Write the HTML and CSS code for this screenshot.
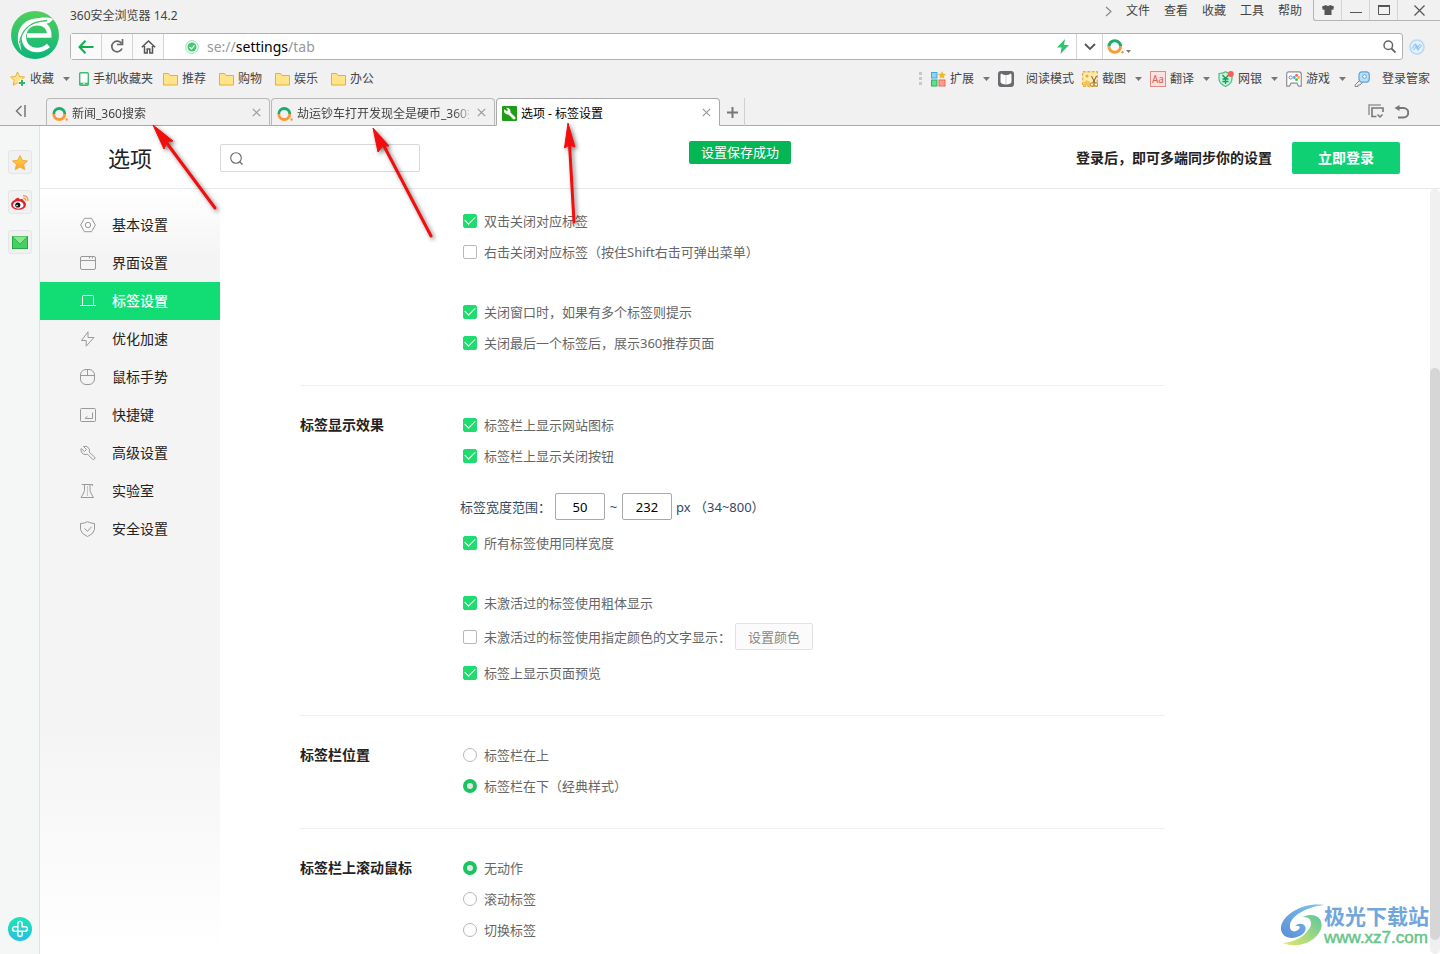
FILE: index.html
```html
<!DOCTYPE html>
<html lang="zh-CN">
<head>
<meta charset="utf-8">
<title>选项 - 标签设置</title>
<link rel="stylesheet" href="styles.css">
</head>
<body>
<svg class="defs" aria-hidden="true">
  <defs>
    <linearGradient id="logo-green" x1="0" y1="0" x2="0" y2="1"><stop offset="0" stop-color="#52cf5c"/><stop offset="1" stop-color="#0cb57c"/></linearGradient>
    <linearGradient id="gold" x1="0" y1="0" x2="0" y2="1"><stop offset="0" stop-color="#ffd83c"/><stop offset="1" stop-color="#ffa52c"/></linearGradient>
    <linearGradient id="aqua" x1="0" y1="0" x2="0" y2="1"><stop offset="0" stop-color="#1be6b4"/><stop offset="1" stop-color="#26bfe4"/></linearGradient>
    <linearGradient id="swirl-blue" x1="0" y1="1" x2="1" y2="0"><stop offset="0" stop-color="#5b8ed6"/><stop offset="1" stop-color="#7cc8ee"/></linearGradient>
    <linearGradient id="swirl-green" x1="0" y1="1" x2="1" y2="0"><stop offset="0" stop-color="#e3e96a"/><stop offset="1" stop-color="#5cc69c"/></linearGradient>
    <symbol id="folder" viewBox="0 0 15 14"><path d="M.5 1.500h5l1.500 2h7.500v9.500h-14z" fill="#ffe48c" stroke="#e6b12e"/></symbol>
    <symbol id="caret" viewBox="0 0 7 4"><path d="M0 0h7L3.500 4z" fill="#777"/></symbol>
    <symbol id="ring" viewBox="0 0 16 16"><path d="M1.800 8a5.500 5.500 0 0 1 11 0" fill="none" stroke="#1bae6b" stroke-width="2.800"/><path d="M1.800 8a5.500 5.500 0 0 0 11 0" fill="none" stroke="#f99a36" stroke-width="2.800"/><circle cx="14.600" cy="13.500" r="1.200" fill="#f99a36"/></symbol>
    <symbol id="close" viewBox="0 0 9 9"><path d="M.8.8l7.400 7.400M8.200.8L.8 8.200" stroke="#999" stroke-width="1.200"/></symbol>
  </defs>
</svg>

<header class="chrome">
  <div class="top">
    <svg class="logo" viewBox="0 0 48 48" role="img" aria-label="360"><circle cx="24" cy="24" r="24" fill="url(#logo-green)"/><path d="M10.500 40C2.500 26 8 9.500 24 7.500c7-1 12-2 18 .2-1.500 3.300-5 5.300-10 5.300C20 13 11 19 9.500 29c-.5 4 0 7 1 11z" fill="#fff"/><path d="M16 24.500h22.200C38.500 16 33 12.200 26.500 12.200 18.500 12.200 12.800 18 12.800 26c0 8 5.700 13 13.200 13 4.500 0 8-1.500 11.500-4.500" fill="none" stroke="#fff" stroke-width="4.600"/><path d="M8.500 32C10.500 20 18 11.800 30 10.300l6-.8" fill="none" stroke="#36c266" stroke-width="1.300"/></svg>
    <div class="title-row">
      <span class="app-title">360安全浏览器 14.2</span>
      <nav class="menu">
        <button aria-label="更多"><svg width="7" height="11" viewBox="0 0 7 11"><path d="M1 1l5 4.500L1 10" fill="none" stroke="#888" stroke-width="1.200"/></svg></button>
        <button>文件</button><button>查看</button><button>收藏</button><button>工具</button><button>帮助</button>
      </nav>
      <div class="window-buttons">
        <button aria-label="皮肤"><svg width="12" height="10" viewBox="0 0 12 10"><path d="M0 1.500L4 0q2 2 4 0l4 1.500-.8 3.500-1.700-.5V10h-7V4.500L.8 5z" fill="#555"/></svg></button>
        <button aria-label="最小化"><svg width="12" height="6" viewBox="0 0 12 6"><path d="M0 5.500h12" stroke="#555"/></svg></button>
        <button aria-label="最大化"><svg width="12" height="10" viewBox="0 0 12 10"><path d="M.5 1h11v8.500H.5z" fill="none" stroke="#555"/><path d="M0 1h12" stroke="#555" stroke-width="2"/></svg></button>
        <button class="wide" aria-label="关闭"><svg width="11" height="11" viewBox="0 0 11 11"><path d="M.5.5l10 10M10.500.5l-10 10" stroke="#555" stroke-width="1.200"/></svg></button>
      </div>
    </div>
    <div class="address-row">
      <div class="address">
        <button class="nav-button" aria-label="后退"><svg width="16" height="14" viewBox="0 0 16 14"><path d="M15.500 7H1.500M7.500.8L1.500 7l6 6.200" fill="none" stroke="#0db04d" stroke-width="2"/></svg></button>
        <button class="nav-button" aria-label="刷新"><svg width="14" height="15" viewBox="0 0 14 15"><path d="M11.500 4.500A5.300 5.300 0 1 0 12 9.500" fill="none" stroke="#666" stroke-width="1.700"/><path d="M12.500 0v5.500H7" fill="none" stroke="#666" stroke-width="1.700"/></svg></button>
        <button class="nav-button" aria-label="主页"><svg width="15" height="14" viewBox="0 0 15 14"><path d="M.8 7.200L7.500 1l6.700 6.200M3.500 6v7h2.700V9h2.600v4h2.700V6" fill="none" stroke="#555" stroke-width="1.500"/></svg></button>
        <div class="url-box">
          <svg width="14" height="14" viewBox="0 0 14 14"><circle cx="7" cy="7" r="6.300" fill="#fff" stroke="#8edfa8"/><circle cx="7" cy="7" r="4.500" fill="#40c970"/><path d="M4.500 7l2 1.800 3-3.500" fill="none" stroke="#fff" stroke-width="1.300"/></svg>
          <div class="url" role="textbox" aria-label="地址" contenteditable="true" spellcheck="false">se://<span class="host">settings</span>/tab</div>
          <svg width="12" height="15" viewBox="0 0 12 15"><path d="M8 0L0 8.500h4.500L3.500 15 12 6H7z" fill="#2fc56c"/></svg>
        </div>
        <button class="drop" aria-label="展开"><svg width="12" height="8" viewBox="0 0 12 8"><path d="M1 1l5 5 5-5" fill="none" stroke="#555" stroke-width="1.800"/></svg></button>
        <div class="search-box">
          <svg width="17" height="17"><use href="#ring"/></svg>
          <svg class="low" width="5" height="3" viewBox="0 0 7 4"><use href="#caret"/></svg>
          <input type="text" aria-label="搜索">
          <svg width="13" height="13" viewBox="0 0 13 13"><circle cx="5.300" cy="5.300" r="4.300" fill="none" stroke="#666" stroke-width="1.500"/><path d="M8.500 8.500l4 4" stroke="#666" stroke-width="1.800"/></svg>
        </div>
      </div>
      <svg width="16" height="16" viewBox="0 0 16 16"><circle cx="8" cy="8" r="7" fill="#e2f1fc" stroke="#b5d9f6" stroke-width="1.600"/><path d="M3 9.500l3-4 3.500 4.500 3.500-4M4.500 11l2.500-3 2.500 3.500M6 5l3 3 2-3" fill="none" stroke="#8dc4f2" stroke-width="1.100"/></svg>
    </div>
  </div>

  <div class="bookmarks">
    <button><svg width="16" height="16" viewBox="0 0 16 16"><path d="M7.500 1l2 4.500 5 .5-3.800 3.300 1 4.900-4.200-2.500-4.300 2.500 1-4.900L.6 6l4.900-.5z" fill="#ffe48c" stroke="#eab036"/><path d="M12 8.500v7M8.500 12h7" stroke="#fff" stroke-width="4"/><path d="M12 9v6M9 12h6" stroke="#2fb865" stroke-width="2"/></svg>收藏<svg class="arrow" width="7" height="4"><use href="#caret"/></svg></button>
    <button><svg width="10" height="14" viewBox="0 0 10 14"><rect x=".7" y=".7" width="8.600" height="12.600" rx="1" fill="#fff" stroke="#3dbb70" stroke-width="1.400"/><path d="M1 11.700h8" stroke="#3dbb70" stroke-width="2"/><path d="M4 11.800h2" stroke="#fff"/></svg>手机收藏夹</button>
    <div class="folders">
      <button><svg width="15" height="14"><use href="#folder"/></svg>推荐</button>
      <button><svg width="15" height="14"><use href="#folder"/></svg>购物</button>
      <button><svg width="15" height="14"><use href="#folder"/></svg>娱乐</button>
      <button><svg width="15" height="14"><use href="#folder"/></svg>办公</button>
    </div>
    <div class="tools">
      <svg class="grip" width="3" height="13" viewBox="0 0 3 13"><path d="M0 0h3v3H0zM0 5h3v3H0zM0 10h3v3H0z" fill="#c8c8c8"/></svg>
      <button><svg width="16" height="16" viewBox="0 0 16 16"><rect x="1.500" y="1.500" width="5.500" height="5.500" fill="#8bd5fa" stroke="#47a5e8"/><rect x="1.500" y="9" width="5.500" height="6" fill="#62de94" stroke="#20b95c"/><rect x="9" y="9" width="6" height="6" fill="#ffa08e" stroke="#ee6652"/><path d="M12 0l1 2.500 3 .8-2 1.700.3 2.500L12 6.500 9.700 7.500 10 5 8 3.300l3-.8z" fill="#f6b81f"/></svg>扩展<svg class="arrow" width="7" height="4"><use href="#caret"/></svg></button>
      <button class="spaced"><svg width="16" height="16" viewBox="0 0 16 16"><rect width="16" height="16" rx="3" fill="#686b70"/><path d="M2.500 3.500l1-1q2.500 2 4.500 1.500 2 .5 4.500-1.500l1 1V11q-.5 2-5.500 2.500Q3 13 2.500 11z" fill="#fff"/><path d="M8 4v9" stroke="#ccc"/></svg>阅读模式</button>
      <button><svg width="16" height="16" viewBox="0 0 16 16"><rect x=".7" y=".7" width="14.600" height="14.600" fill="#ffecac" stroke="#eab13d" stroke-width="1.400" stroke-dasharray="3 1.500"/><circle cx="5" cy="5" r="1.500" fill="#efa63b"/><path d="M1 14q2-7 7-3v4H1z" fill="#f5c35d"/><path d="M9.500 5l3.500 7M14.500 5L11 12" stroke="#7a5b2b"/><circle cx="10" cy="13.500" r="1.700" fill="#fff" stroke="#bd7410"/><circle cx="14" cy="13.500" r="1.700" fill="#fff" stroke="#bd7410"/></svg>截图<svg class="arrow" width="7" height="4"><use href="#caret"/></svg></button>
      <button><span class="aa">Aa</span>翻译<svg class="arrow" width="7" height="4"><use href="#caret"/></svg></button>
      <button><svg width="16" height="16" viewBox="0 0 16 16"><path d="M7.500.7Q10 2.500 14 2.500v5q0 5-6.500 8Q1 12.500 1 7.500v-5q4 0 6.500-1.800z" fill="#c5f6d9" stroke="#4bbd84" stroke-width="1.200"/><path d="M4.500 4l3 3.500 3-3.500M7.500 7.500V13M4.500 8h6M4.500 10.500h6" fill="none" stroke="#179a5b" stroke-width="1.300"/><circle cx="12.800" cy="3" r="3" fill="#f95d58"/></svg>网银<svg class="arrow" width="7" height="4"><use href="#caret"/></svg></button>
      <button><svg width="16" height="16" viewBox="0 0 16 16"><path d="M3 .8h10q2.300 0 2.300 2.400v12h-2.800l-1.500-3H5l-1.500 3H.7v-12Q.7.800 3 .8z" fill="#fff" stroke="#8b8e94" stroke-width="1.200"/><circle cx="4.700" cy="6.500" r="1.600" fill="none" stroke="#888"/><circle cx="10.500" cy="4.300" r="1.400" fill="#f55"/><circle cx="8.300" cy="6.500" r="1.400" fill="#3eaef5"/><circle cx="12.700" cy="6.500" r="1.400" fill="#fa3"/><circle cx="10.500" cy="8.700" r="1.400" fill="#2fc56c"/></svg>游戏<svg class="arrow" width="7" height="4"><use href="#caret"/></svg></button>
      <button class="spaced"><svg width="16" height="16" viewBox="0 0 16 16"><path d="M6.500 8.500L1 14v1.500h3V14h2l3-3" fill="#eee" stroke="#888"/><rect x="5" y=".8" width="10.300" height="10.300" rx="3" fill="#b8def8" stroke="#62a3dc" stroke-width="1.200"/><circle cx="10.500" cy="5.500" r="1.800" fill="#fff" stroke="#62a3dc"/></svg>登录管家</button>
    </div>
  </div>

  <div class="tabs">
    <button class="collapse" aria-label="收起"><svg width="11" height="12" viewBox="0 0 11 12"><path d="M6.500 1L1.500 6l5 5M10 0v12" fill="none" stroke="#777" stroke-width="1.500"/></svg></button>
    <div class="tab"><svg width="16" height="16"><use href="#ring"/></svg><span class="tab-text">新闻_360搜索</span><button aria-label="关闭标签"><svg width="9" height="9"><use href="#close"/></svg></button></div>
    <div class="tab"><svg width="16" height="16"><use href="#ring"/></svg><span class="tab-text">劫运钞车打开发现全是硬币_360搜索</span><button aria-label="关闭标签"><svg width="9" height="9"><use href="#close"/></svg></button></div>
    <div class="tab active"><svg width="15" height="15" viewBox="0 0 15 15"><rect width="15" height="15" rx="1" fill="#1e9e16"/><path d="M6 6l6 6" stroke="#fff" stroke-width="2.800" stroke-linecap="round"/><path d="M2.500 3.200L4.800 5.300 6 4 4 2a3.500 3.500 0 0 1 4.300 4.500L6.500 8.300A3.500 3.500 0 0 1 2.500 3.200z" fill="#fff"/></svg><span class="tab-text">选项 - 标签设置</span><button aria-label="关闭标签"><svg width="9" height="9"><use href="#close"/></svg></button></div>
    <button class="new-tab" aria-label="新标签"><svg width="11" height="11" viewBox="0 0 11 11"><path d="M5.500 0v11M0 5.500h11" stroke="#777" stroke-width="2"/></svg></button>
    <div class="tab-actions">
      <button aria-label="标签列表"><svg width="16" height="15" viewBox="0 0 16 15"><path d="M1 11V1h12" fill="none" stroke="#999" stroke-width="1.600"/><path d="M8.500 12.500H4V4h11v4" fill="none" stroke="#777" stroke-width="1.600"/><path d="M9.500 10.500l2.500 2.500 2.500-2.500" fill="none" stroke="#777" stroke-width="1.500"/></svg></button>
      <button aria-label="恢复标签"><svg width="15" height="14" viewBox="0 0 15 14"><path d="M4 3h5.500a4.500 4.500 0 0 1 0 9.500H4" fill="none" stroke="#777" stroke-width="2"/><path d="M5.500 0v6L.5 3z" fill="#777"/></svg></button>
    </div>
  </div>
</header>

<div class="body">
  <aside class="dock">
    <button aria-label="收藏"><svg width="16" height="15" viewBox="0 0 16 15"><path d="M8 .5l2.300 4.800 5.200.6-3.900 3.500 1.100 5.200L8 12l-4.700 2.600 1.100-5.200L.5 5.900l5.200-.6z" fill="url(#gold)" stroke="#e9a13a" stroke-width=".8"/></svg></button>
    <button aria-label="微博"><svg width="18" height="15" viewBox="0 0 18 15"><ellipse cx="7.500" cy="9.500" rx="7.500" ry="5.300" fill="#e6202a"/><path d="M3 6q2.500-4 5-3l.5 1.500q4-1.500 4 1.500" fill="#e6202a"/><ellipse cx="7.300" cy="10" rx="5.300" ry="3.700" fill="#fff"/><circle cx="6.800" cy="10" r="2.600" fill="#111"/><circle cx="6" cy="10.600" r=".8" fill="#fff"/><path d="M12 .8q5-.3 5 5.200M12.300 3.300q2.500 0 2.500 2.500" fill="none" stroke="#f6a54b" stroke-width="1.400"/></svg></button>
    <button aria-label="邮件"><svg width="16" height="13" viewBox="0 0 16 13"><rect x=".5" y=".5" width="15" height="12" fill="#48cf62" stroke="#25a843"/><path d="M.5.5h15L8 8z" fill="#8ae691"/><path d="M.5.8L8 8.200 15.500.8" fill="none" stroke="#2eb34c"/></svg></button>
    <button class="dock-add" aria-label="添加"><svg width="24" height="24" viewBox="0 0 24 24"><circle cx="12" cy="12" r="12" fill="url(#aqua)"/><path d="M10 9.800H6.800a2.200 2.200 0 0 0 0 4.400h10.400a2.200 2.200 0 0 0 0-4.400H14.200V6.800a2.200 2.200 0 0 0-4.400 0v10.400a2.200 2.200 0 0 0 4.400 0V14.200" fill="none" stroke="#fff" stroke-width="1.500" stroke-linecap="round"/></svg></button>
  </aside>

  <div class="page">
    <div class="page-head">
      <h1>选项</h1>
      <label class="find"><svg width="13" height="13" viewBox="0 0 13 13"><circle cx="6" cy="6" r="5.300" fill="none" stroke="#666" stroke-width="1.100"/><path d="M9.800 9.800l2.700 2.700" stroke="#666" stroke-width="1.200"/></svg><input type="search" aria-label="搜索设置"></label>
      <div class="toast" role="status">设置保存成功</div>
      <div class="sync"><span>登录后，即可多端同步你的设置</span><button>立即登录</button></div>
    </div>

    <div class="columns">
      <nav class="side">
        <a href="#"><svg viewBox="0 0 16 16"><path d="M4.500 1.300h7L15.400 8l-3.900 6.700h-7L.6 8z"/><circle cx="8" cy="8" r="2.700"/></svg>基本设置</a>
        <a href="#"><svg viewBox="0 0 16 16"><rect x=".5" y="1.500" width="15" height="13" rx="1.500"/><path d="M.5 5.500h15M9.500 1.500v2M12.500 1.500v2"/></svg>界面设置</a>
        <a href="#" class="current" aria-current="page"><svg viewBox="0 0 16 16"><path d="M0 12.500H2.500V3.500q0-1 1-1h9q1 0 1 1v9H16M2.500 12.500h11"/></svg>标签设置</a>
        <a href="#"><svg viewBox="0 0 16 16"><path d="M8 .8L1.500 9.500h4.700v5.700L14 6.500H8z"/></svg>优化加速</a>
        <a href="#"><svg viewBox="0 0 16 16"><rect x=".5" y=".5" width="14" height="15" rx="5.500"/><path d="M.5 6.500h14M7.500.5v6"/></svg>鼠标手势</a>
        <a href="#"><svg viewBox="0 0 16 16"><rect x=".5" y="1.500" width="15" height="13" rx="1"/><path d="M12.500 5.500v6H5l2.500-2.200"/></svg>快捷键</a>
        <a href="#"><svg viewBox="0 0 16 16"><path d="M3.500 1.500l3 3-2 2-3.300-3A4.500 4.500 0 0 0 6 9.500l1.500-.3 5 5q1.200.8 2.200-.3.800-1-.2-2L9.300 7.300A4.500 4.500 0 0 0 3.500 1.500z"/></svg>高级设置</a>
        <a href="#"><svg viewBox="0 0 16 16"><path d="M2 2v-.5h10.500V3M4.500 2v5.500q-1 3.500-3.500 7h12.500q-2.500-3.500-3.500-7V2"/><path d="M7.500 3.500v9" stroke-dasharray="1 1"/></svg>实验室</a>
        <a href="#"><svg viewBox="0 0 16 16"><path d="M7.500.7Q11 2.500 14.500 2.500v6q-.5 4.500-7 7-6.500-2.500-7-7v-6Q4.500 2.500 7.500.7z"/><path d="M4.500 7.500l3 2.800 4-4.500"/></svg>安全设置</a>
      </nav>

      <main class="settings">
        <section>
          <div class="options">
            <label class="option"><input type="checkbox" checked>双击关闭对应标签</label>
            <label class="option"><input type="checkbox">右击关闭对应标签（按住Shift右击可弹出菜单）</label>
            <label class="option group"><input type="checkbox" checked>关闭窗口时，如果有多个标签则提示</label>
            <label class="option"><input type="checkbox" checked>关闭最后一个标签后，展示360推荐页面</label>
          </div>
        </section>
        <section>
          <h2>标签显示效果</h2>
          <div class="options">
            <label class="option"><input type="checkbox" checked>标签栏上显示网站图标</label>
            <label class="option"><input type="checkbox" checked>标签栏上显示关闭按钮</label>
            <div class="width-range"><label for="min-width">标签宽度范围：</label><input id="min-width" type="text" value="50"><span class="tilde">~</span><input type="text" value="232" aria-label="最大宽度"><span class="unit">px （34~800）</span></div>
            <label class="option"><input type="checkbox" checked>所有标签使用同样宽度</label>
            <label class="option group"><input type="checkbox" checked>未激活过的标签使用粗体显示</label>
            <div class="color-row"><label class="option"><input type="checkbox">未激活过的标签使用指定颜色的文字显示：</label><button>设置颜色</button></div>
            <label class="option"><input type="checkbox" checked>标签上显示页面预览</label>
          </div>
        </section>
        <section>
          <h2>标签栏位置</h2>
          <div class="options">
            <label class="option"><input type="radio" name="position">标签栏在上</label>
            <label class="option"><input type="radio" name="position" checked>标签栏在下（经典样式）</label>
          </div>
        </section>
        <section>
          <h2>标签栏上滚动鼠标</h2>
          <div class="options">
            <label class="option"><input type="radio" name="wheel" checked>无动作</label>
            <label class="option"><input type="radio" name="wheel">滚动标签</label>
            <label class="option"><input type="radio" name="wheel">切换标签</label>
          </div>
        </section>
      </main>
      <div class="scrollbar"><div class="thumb"></div></div>
    </div>
  </div>
</div>

<svg class="arrows" viewBox="0 0 600 260" width="600" height="260" aria-hidden="true">
  <g fill="#f30d0d" stroke="#f30d0d">
    <path d="M166 142l49 66" stroke-width="3" stroke-linecap="round"/><path d="M153 125l20 16-6 1-3 7z"/>
    <path d="M384 146l47 90" stroke-width="3" stroke-linecap="round"/><path d="M373 128l16 18-6 0-5 6z"/>
    <path d="M569.500 144l4.500 78" stroke-width="3" stroke-linecap="round"/><path d="M568 123l7 24-5.500-2-5 3z"/>
  </g>
</svg>

<div class="watermark">
  <svg width="44" height="42" viewBox="0 0 44 42"><path d="M44 1C24-2 3 10 1 23c-1 9 8 13 16 10 7-2 10-7 8-11-2-3-7-3-10 0 5-1 6 2 3 4-4 3-9 1-8-5C11 12 26 3 44 1z" fill="url(#swirl-blue)"/><path d="M22 13c9-1 11 6 7 12C24 33 14 38 3 39c15 6 33-1 38-14 3-10-5-18-19-12z" fill="url(#swirl-green)"/></svg>
  <div><div class="mark-name">极光下载站</div><div class="mark-site">www.xz7.com</div></div>
</div>
</body>
</html>
```
FILE: styles.css
```css
* { box-sizing: border-box; }
body {
  margin: 0;
  height: 100vh;
  display: flex;
  flex-direction: column;
  overflow: hidden;
  position: relative;
  background: #fff;
  color: #444;
  font: 12px/16px "Noto Sans", "Noto Sans CJK SC", sans-serif;
}
button { border: 0; padding: 0; margin: 0; background: none; font: inherit; color: inherit; display: flex; align-items: center; justify-content: center; white-space: nowrap; }
input { font: inherit; color: inherit; margin: 0; }
svg { display: block; flex: none; }
.defs { position: absolute; width: 0; height: 0; }

/* Browser chrome */
.chrome { background: #f1f1f1; flex: none; }
.top { display: grid; grid-template-columns: 70px 1fr; grid-template-rows: 33px 27px; }
.logo { grid-row: 1 / 3; width: 48px; height: 48px; margin: 11px 0 0 11px; }
.title-row { display: flex; align-items: flex-start; }
.app-title { padding-top: 8px; flex: 1; }
.menu { display: flex; gap: 14px; padding: 3px 11px 0 0; }
.window-buttons { display: flex; height: 21px; border: 1px solid #b5b5b5; border-width: 0 0 1px 1px; border-bottom-left-radius: 3px; }
.window-buttons button { width: 28px; border-right: 1px solid #d4d4d4; }
.window-buttons button.wide { width: 42px; border: 0; }
.address-row { display: flex; align-items: center; gap: 6px; padding-right: 15px; }
.address { flex: 1; height: 27px; display: flex; background: #fff; border: 1px solid #b2b2b2; border-radius: 3px; }
.nav-button { width: 31px; border-right: 1px solid #d4d4d4; background: #fafafa; }
.url-box { flex: 1; display: flex; align-items: center; gap: 8px; padding: 0 7px 0 21px; }
.url { flex: 1; font-size: 14px; line-height: 20px; color: #999; outline: 0; }
.host { color: #000; }
.drop { width: 27px; border: 1px solid #d4d4d4; border-width: 0 1px; }
.search-box { width: 299px; display: flex; align-items: center; gap: 2px; padding: 0 6px 0 4px; }
.search-box input { flex: 1; min-width: 0; border: 0; background: none; outline: 0; }
.low { align-self: flex-end; margin-bottom: 6px; }

.bookmarks { height: 37px; display: flex; align-items: center; padding: 0 10px; gap: 9px; }
.bookmarks button { gap: 4px; }
.bookmarks .arrow { margin-left: 5px; }
.folders { display: flex; gap: 13px; padding-left: 1px; }
.tools { display: flex; align-items: center; gap: 8px; margin-left: auto; }
.bookmarks .spaced { gap: 12px; }
.aa { width: 16px; height: 16px; border: 1px solid #dd8c86; background: #ffe0dc; color: #d2625b; font-size: 10px; line-height: 14px; }

.tabs { height: 29px; display: flex; align-items: flex-end; box-shadow: inset 0 -1px #aaa; }
.collapse { width: 46px; height: 28px; padding: 0 6px 2px 0; }
.tab { width: 224px; height: 28px; margin-right: 1px; padding: 3px 8px 0 5px; display: flex; align-items: center; gap: 4px; border: 1px solid #b8b8b8; border-bottom-color: #aaa; border-radius: 4px 4px 0 0; }
.tab.active { background: #fff; border-color: #aaa; border-bottom-color: #fff; color: #000; margin-right: 0; }
.tab-text { flex: 1; overflow: hidden; white-space: nowrap; margin-right: 4px; }
.tab:not(.active) .tab-text { mask-image: linear-gradient(to right, #000 156px, transparent 178px); }
.tab button { height: 22px; align-items: flex-start; padding-top: 5px; }
.new-tab { width: 25px; height: 28px; border-right: 1px solid #d0d0d0; }
.tab-actions { display: flex; gap: 10px; margin-left: auto; padding: 0 31px 7px 0; }

/* Side dock */
.body { flex: 1; min-height: 0; display: flex; }
.dock { width: 40px; flex: none; padding: 24px 0 13px; display: flex; flex-direction: column; align-items: center; gap: 16px; background: #f5f7f7; border-right: 1px solid #e2e2e2; }
.dock button { width: 24px; height: 24px; border: 1px solid #e6e6e6; border-radius: 3px; background: #f1f1f1; }
.dock .dock-add { margin-top: auto; border: 0; background: none; }

/* Settings page */
.page { flex: 1; min-width: 0; display: flex; flex-direction: column; }
.page-head { position: relative; flex: none; height: 63px; padding: 2px 40px 0 0; display: flex; align-items: center; border-bottom: 1px solid #e8e8e8; }
h1 { margin: 0; width: 180px; text-align: center; font-size: 22px; line-height: 30px; font-weight: 400; color: #222; }
.find { width: 200px; height: 28px; padding: 0 9px; display: flex; align-items: center; gap: 6px; border: 1px solid #d9d9d9; border-radius: 2px; }
.find input { flex: 1; min-width: 0; border: 0; outline: 0; background: none; }
.toast { position: absolute; top: 15px; left: 50%; transform: translateX(-50%); padding: 0 12px; font-size: 13px; line-height: 23px; color: #fff; background: #05b655; border-radius: 2px; }
.sync { margin-left: auto; display: flex; align-items: center; gap: 20px; font-size: 14px; font-weight: 700; color: #222; }
.sync button { width: 108px; height: 32px; color: #fff; background: #10d074; border-radius: 2px; }

.columns { flex: 1; min-height: 0; display: flex; }
.side { width: 180px; flex: none; padding-top: 17px; background: linear-gradient(#fff, #f4f4f4 70px, #f4f4f4 70%, #fff); }
.side a { height: 38px; padding-left: 40px; display: flex; align-items: center; gap: 16px; font-size: 14px; line-height: 20px; color: #222; text-decoration: none; }
.side svg { width: 16px; height: 16px; fill: none; stroke: #999; }
.side .current { background: #12dc74; color: #fff; font-weight: 500; }
.side .current svg { stroke: #fff; }

.settings { flex: 1; min-width: 0; overflow: hidden; padding: 0 0 0 80px; font-size: 13px; color: #666; }
section { max-width: 865px; display: grid; grid-template-columns: 160px 1fr; padding: 23px 0 27px; border-bottom: 1px solid #f0f0f0; }
section:first-child { padding-top: 16px; }
section:last-child { border: 0; }
h2 { margin: 0; font-size: 14px; line-height: 31px; font-weight: 700; color: #222; }
.options { grid-column: 2; }
.option { display: flex; align-items: center; gap: 7px; height: 31px; padding-left: 3px; }
.option.group { margin-top: 29px; }
.option input { appearance: none; flex: none; width: 14px; height: 14px; border: 1px solid #b8b8b8; border-radius: 2px; background: #fff; display: grid; place-items: center; }
.option input[type="checkbox"]:checked { border-color: #1edc6e; background: #1edc6e; }
.option input[type="checkbox"]:checked::after { content: ""; width: 9px; height: 5px; margin-bottom: 3px; border: 1px solid #fff; border-width: 0 0 1px 1px; transform: rotate(-45deg); }
.option input[type="radio"] { border-radius: 50%; }
.option input[type="radio"]:checked { border: 4px solid #19c55f; background: #e5e5e5; }
.width-range { display: flex; align-items: center; height: 27px; margin: 22px 0 7px; color: #34495e; }
.width-range label { margin-right: 4px; }
.width-range input { width: 50px; height: 27px; padding: 0; border: 1px solid #a9a9a9; border-radius: 2px; text-align: center; color: #000; }
.tilde { width: 17px; text-align: center; }
.unit { margin-left: 4px; }
.color-row { display: flex; align-items: center; gap: 4px; padding: 3px 0 5px; }
.color-row button { width: 78px; height: 27px; border: 1px solid #e2e2e2; border-radius: 2px; background: #fbfbfb; color: #888; }

.scrollbar { width: 10px; flex: none; padding-top: 179px; border-radius: 5px; background: #f0f0f0; }
.thumb { height: 572px; border-radius: 5px; background: #d6d6d6; }

/* Overlays */
.arrows { position: absolute; top: 0; left: 0; pointer-events: none; filter: drop-shadow(2px 2px 2px rgba(0, 0, 0, .5)); }
.watermark { position: absolute; right: 11px; bottom: 7px; display: flex; align-items: center; pointer-events: none; }
.mark-name { font-size: 21px; line-height: 26px; font-weight: 700; color: #70a6dc; }
.mark-site { font: 17px/18px "Liberation Sans", sans-serif; color: #67c58a; -webkit-text-stroke: 0.5px #67c58a; }
```
